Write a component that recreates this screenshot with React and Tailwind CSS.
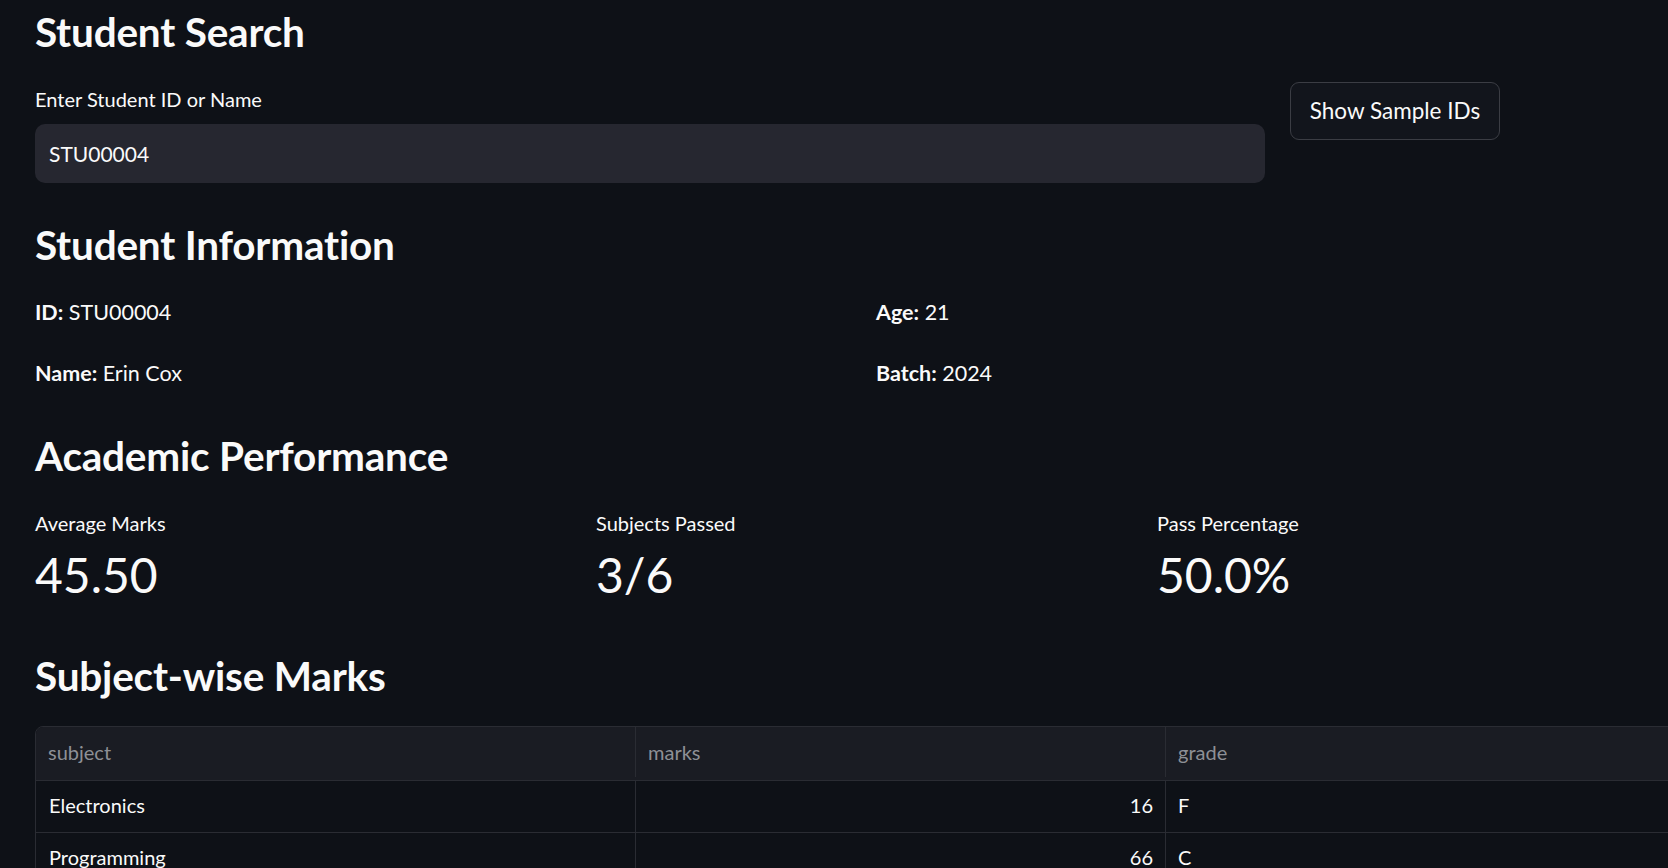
const student = { id: 'STU00004', name: 'Erin Cox', age: 21, batch: 2024 };

const metrics = [
	{ label: 'Average Marks', value: '45.50' },
	{ label: 'Subjects Passed', value: '3/6' },
	{ label: 'Pass Percentage', value: '50.0%' }
];

const rows = [
	{ subject: 'Electronics', marks: 16, grade: 'F' },
	{ subject: 'Programming', marks: 66, grade: 'C' },
	{ subject: 'Mathematics', marks: 48, grade: 'D' }
];

function Heading({ children, className = '' }) {
	return (
		<h2 className={`text-[40.5px] leading-[49px] font-bold tracking-[-0.2px] ${className}`}>
			{children}
		</h2>
	);
}

export default function App() {
	return (
		<div
			className="h-[868px] w-full overflow-hidden bg-[#0e1117] text-[#fafafa]"
			style={{ fontFamily: 'Lato, "Liberation Sans", sans-serif' }}
		>
			<div className="w-[1700px] pl-[35px] pt-[7px]">
				<Heading>Student Search</Heading>

				<div className="flex gap-[25px]">
					<div className="w-[1230px] pt-[31px]">
						<label className="block text-[20px] leading-[24px]">Enter Student ID or Name</label>
						<div className="mt-[13px] flex h-[59px] items-center rounded-[10px] bg-[#262730] px-[14px] text-[21px]">
							{student.id}
						</div>
					</div>
					<div className="pt-[26px]">
						<button className="h-[58px] w-[210px] rounded-[9px] border border-[#3b3d44] bg-[#12151c] text-[22.5px] text-[#fafafa]">
							Show Sample IDs
						</button>
					</div>
				</div>

				<Heading className="mt-[37px]">Student Information</Heading>
				<div className="mt-[31px] grid grid-cols-2 gap-x-[17px] gap-y-[36px] text-[21.5px] leading-[25px]">
					<p><span className="font-bold">ID:</span> {student.id}</p>
					<p><span className="font-bold">Age:</span> {student.age}</p>
					<p><span className="font-bold">Name:</span> {student.name}</p>
					<p><span className="font-bold">Batch:</span> {student.batch}</p>
				</div>

				<Heading className="mt-[45px]">Academic Performance</Heading>
				<div className="mt-[31px] grid grid-cols-3 gap-[18px]">
					{metrics.map(m => (
						<div key={m.label}>
							<div className="text-[20px] leading-[24px]">{m.label}</div>
							<div className="mt-[11px] text-[48px] leading-[58px]">{m.value}</div>
						</div>
					))}
				</div>

				<Heading className="mt-[47px]">Subject-wise Marks</Heading>
				<div className="mt-[26px] overflow-hidden rounded-t-[8px] border border-[#2a2c33] text-[20px]">
					<div className="grid h-[53px] grid-cols-[599px_530px_1fr] bg-[#1a1c23] pb-[3px] text-[#8e9096]">
						<div className="flex items-center px-[12px]">subject</div>
						<div className="flex items-center border-l border-[#2a2c33] px-[12px]">marks</div>
						<div className="flex items-center border-l border-[#2a2c33] px-[12px]">grade</div>
					</div>
					{rows.map(r => (
						<div key={r.subject} className="grid h-[52px] grid-cols-[599px_530px_1fr] border-t border-[#2a2c33]">
							<div className="flex items-center px-[13px] pb-[3px]">{r.subject}</div>
							<div className="flex items-center justify-end border-l border-[#2a2c33] px-[12px] pb-[3px]">{r.marks}</div>
							<div className="flex items-center border-l border-[#2a2c33] px-[12px] pb-[3px]">{r.grade}</div>
						</div>
					))}
				</div>
			</div>
		</div>
	);
}
